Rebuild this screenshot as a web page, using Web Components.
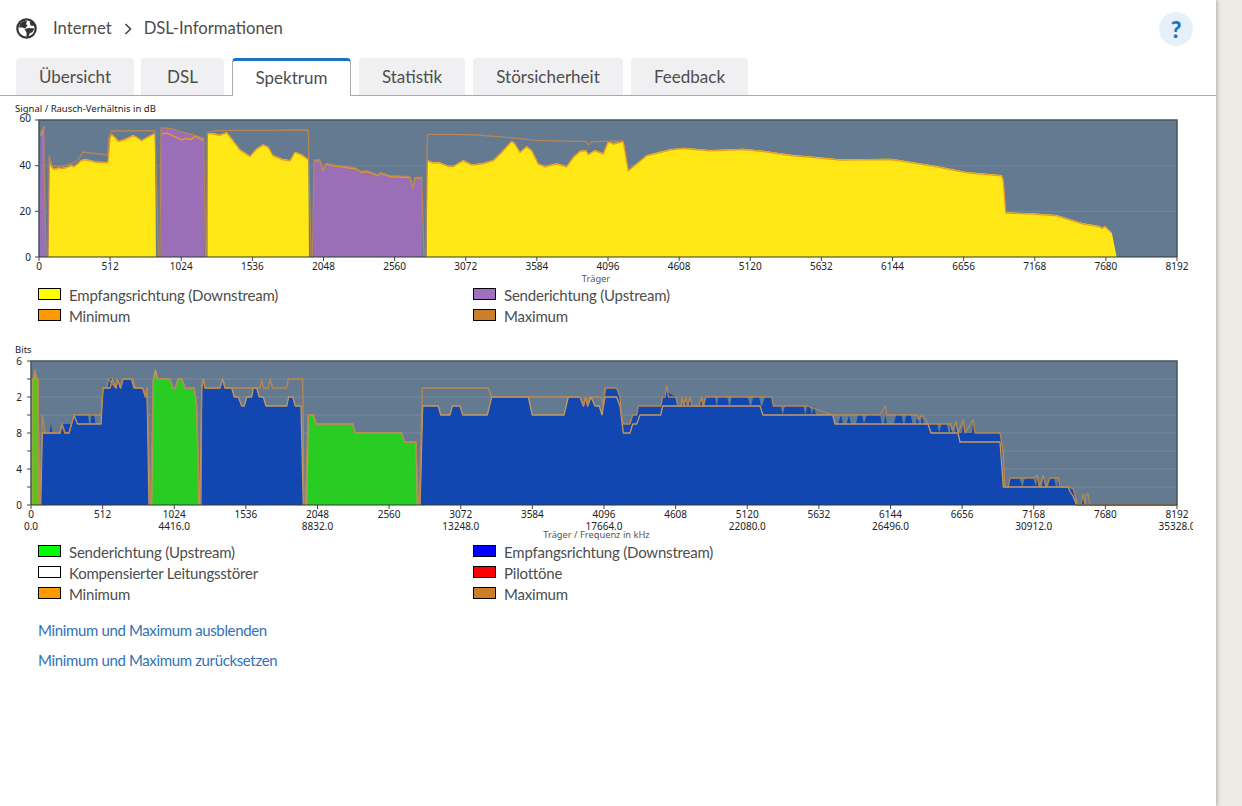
<!DOCTYPE html>
<html lang="de">
<head>
<meta charset="utf-8">
<title>DSL-Informationen</title>
<style>
html, body { margin: 0; height: 806px; overflow: hidden; background: #eeebe5; }
body { font-family: "Lato", "Open Sans", sans-serif; color: #4a4a4a; }
</style>
</head>
<body>
<app-shell>
  <crumb-bar></crumb-bar>
  <tab-bar></tab-bar>
  <spektrum-chart kind="snr"></spektrum-chart>
  <chart-legend items="#ffff00:Empfangsrichtung (Downstream)|#a070c0:Senderichtung (Upstream)|#ff9900:Minimum|#cc7f2a:Maximum"></chart-legend>
  <spektrum-chart kind="bits" style="margin-top:16px"></spektrum-chart>
  <chart-legend items="#00ff00:Senderichtung (Upstream)|#0000ff:Empfangsrichtung (Downstream)|#ffffff:Kompensierter Leitungsstörer|#ff0000:Pilottöne|#ff9900:Minimum|#cc7f2a:Maximum"></chart-legend>
  <link-list></link-list>
</app-shell>

<script>
class AppShell extends HTMLElement {
  constructor() {
    super();
    const shadow = this.attachShadow({ mode: 'open' });
    shadow.innerHTML = `
    <style>
      :host { display: block; width: 1216px; height: 806px; background: #fff; box-shadow: 1px 0 4px rgba(90,85,75,.45); }
    </style>
    <slot></slot>`;
  }
}

class CrumbBar extends HTMLElement {
  constructor() {
    super();
    const shadow = this.attachShadow({ mode: 'open' });
    shadow.innerHTML = `
    <style>
      :host { display: flex; align-items: center; height: 58px; padding: 0 23px 3px 16px; box-sizing: border-box; font-size: 16.7px; color: #4d4d4d; }
      .globe { width: 21px; height: 21px; margin-right: 16px; margin-top: 1px; }
      .sep { width: 8px; height: 12px; margin: 2px 12px 0 12px; }
      .help { margin-left: auto; width: 34px; height: 34px; border-radius: 50%; background: #e6f0f8; color: #1c73c2;
              display: flex; align-items: center; justify-content: center; font-weight: 900; font-size: 23px; margin-top: 2px; }
    </style>
    <svg class="globe" viewBox="0 0 21 21">
      <circle cx="10.5" cy="10.5" r="9.2" fill="#fff" stroke="#333" stroke-width="2.2"/>
      <path d="M4 5.5 L8.5 2.5 L11 3.5 L10 6 L11.5 7.5 L9 10.5 L6.5 9.5 L3 9.5 Z" fill="#333"/>
      <path d="M8.5 11 L13 10 L18.5 10.5 L16.5 14 L13.5 15.5 L12.5 19 L10.5 18.5 L10.5 14.5 Z" fill="#333"/>
      <path d="M13.5 3 L17 5 L18.5 8 L14.5 7.5 Z" fill="#333"/>
    </svg>
    <span>Internet</span>
    <svg class="sep" viewBox="0 0 8 12"><path d="M1.5 1 L6.5 6 L1.5 11" fill="none" stroke="#444" stroke-width="1.6"/></svg>
    <span>DSL-Informationen</span>
    <div class="help">?</div>`;
  }
}

class TabBar extends HTMLElement {
  constructor() {
    super();
    const shadow = this.attachShadow({ mode: 'open' });
    shadow.innerHTML = `
    <style>
      :host { display: flex; height: 38px; padding-left: 16px; box-sizing: border-box; border-bottom: 1px solid #aaa; font-size: 17px; color: #4d4d4d; }
      .tab { height: 37px; box-sizing: border-box; background: #f0f0f2; border-radius: 4px 4px 0 0;
             display: flex; align-items: center; justify-content: center; margin-right: 8px; }
      .active { height: 38px; background: #fff; border: 1px solid #aaa; border-top: 3px solid #1c73c2; border-bottom: 0; padding-bottom: 2px; }
    </style>
    <div class="tab" style="width:118px;margin-right:7px">Übersicht</div>
    <div class="tab" style="width:83px">DSL</div>
    <div class="tab active" style="width:119px">Spektrum</div>
    <div class="tab" style="width:106px">Statistik</div>
    <div class="tab" style="width:150px">Störsicherheit</div>
    <div class="tab" style="width:117px">Feedback</div>`;
  }
}

// alle Punkte in Seitenkoordinaten, snr: [x, y], bits: [x, bit]
const snrDaten = [
  { fill: '#9b6fb8', top: [[39,257],[41,135],[43,128],[44.5,126],[45,257]], max: [[41,133],[43.5,127],[46,257]] },
  { fill: '#ffe816', top: [[48,257],[49.3,156],[50,162],[52,167],[54,168.5],[58,168],[59,166],[61,168],[66,167],[71,165],[74,166],[78,163],[81,160],[85,159],[90,160],[96,161.5],[107,162],[108,161],[110,137],[111.7,134],[115,136.7],[118.3,140.7],[121.7,140],[126.7,138],[133,135],[136.7,136.7],[141.7,140],[146.7,137],[155,132.7],[156,257]],
    max: [[48,257],[49.3,156],[52,166],[58,167],[71,164],[78,160],[83,152],[90,153],[107.7,155],[108.5,140],[111,131],[155,130.7],[158.5,257]] },
  { fill: '#9b6fb8', top: [[161,257],[161,127.7],[165,128],[173,129],[181.7,132],[193,134.7],[203.7,138],[204,257]],
    min: [[161.7,133],[166.7,132],[173,135],[181.7,139],[186.7,137.7],[191.7,138.7],[195,135.3],[203.7,140]], max: [[160,257],[161,127.7],[165,128],[173,129],[181.7,132],[193,134.7],[203.7,138],[205.5,257]] },
  { fill: '#ffe816', top: [[207.5,257],[207.3,132.7],[213,133],[220,134.7],[226.7,132],[233,140],[240,149.3],[250,155.7],[256.7,148.3],[263.3,144.3],[268.3,146.7],[273,155],[283,159],[290,160],[295,151.7],[301.7,154.3],[308.3,159],[309,257]],
    max: [[206.5,257],[207.3,132.7],[216.7,130.7],[308.3,130],[311,257]] },
  { fill: '#9b6fb8', top: [[314,257],[314,160],[320,160],[322.7,170],[326,163.3],[333,165],[346.7,166.7],[355,167.7],[361.7,171.7],[366.7,170.7],[378.3,175],[380,172.3],[390,175.7],[410,176.7],[412.7,187.3],[415,177.3],[421.7,177.3],[422.3,257]],
    max: [[312.5,257],[314,160],[320,160],[322.7,170],[326,163.3],[333,165],[346.7,166.7],[355,167.7],[361.7,171.7],[366.7,170.7],[378.3,175],[380,172.3],[390,175.7],[410,176.7],[412.7,187.3],[415,177.3],[421.7,177.3],[424,257]] },
  { fill: '#ffe816', top: [[426.7,257],[427.3,160],[433.3,162.3],[440,162.3],[448.3,165.7],[453.3,165.7],[463.3,160],[471.7,164.3],[481.7,163.3],[493.3,160],[503.3,150],[511.7,140.7],[515,143.3],[520,151.7],[526.7,146],[531.7,150],[538.3,163.3],[545,166],[556.7,163.3],[566.7,166],[573.3,156.7],[580,150.7],[586,150],[588.3,154],[595,150],[603.3,153.3],[608.3,141],[613.3,143.3],[623.3,141],[628.3,170],[636.7,163.3],[646.7,155],[670,149.3],[683.3,147.7],[710,150],[743.3,148.7],[763.3,150.7],[793.3,155],[820,157.3],[840,159.3],[890,158.7],[900,160],[936.7,166],[966.7,172],[1001.7,175],[1003.3,180],[1005.7,212.3],[1033.3,213.3],[1056.7,215],[1083.3,223.3],[1100,226],[1101.7,227.7],[1105,226],[1111.7,232.3],[1116.7,257],[1177,257]],
    max: [[426,257],[427.3,134.3],[453.3,134.3],[476.7,135],[510,137.7],[536.7,140.3],[576.7,141.3],[586,141.5],[588.3,145],[591.7,141.7],[623.3,141]] }
];

const bitsDaten = [
  { fill: '#5fc020', top: [[31.7,0],[32,14],[33.5,14],[35,15],[36.5,14],[38,14],[39.3,0]], max: [[32,14],[33.5,14],[35,15],[36.5,14],[38,14],[39.3,0]] },
  { fill: '#1246b0', top: [[40.7,0],[42.3,8],[49.5,8],[51,9],[52.5,8],[60,8],[62,9],[71,9],[73,10],[88,10],[89,9],[90.5,9],[91.5,10],[94,10],[95.5,9],[101,9],[103,13],[107,13],[108,14],[114,14],[116,13],[117.5,14],[119,14],[120.5,13],[123,14],[133,14],[135,13],[143,13],[145.5,12],[147,13],[149,0]],
    min: [[40.7,0],[42.3,8],[60,8],[62,9],[65,8],[69,8],[74,10],[77.5,9],[101,9],[103,13],[110,13],[112.5,14],[116,13],[117.5,14],[120.5,13],[123,14],[131.5,14],[134,13],[142.5,13],[145.5,12],[147,13],[149,0]],
    max: [[40,0],[42.3,10],[45,8],[60,8],[62,9],[65,8],[69,8],[74,10],[101,10],[103,13],[107,13],[108.5,14],[116,13],[117.5,14],[120.5,13],[123,14],[133,14],[135,13],[143,13],[145.5,12],[147,13],[150.5,0]] },
  { fill: '#28cc22', top: [[151.7,0],[153.3,14],[155.5,15],[157.5,14],[170,14],[173,13],[175.5,13],[178,14],[182,14],[185,13],[194.3,13],[196.7,11],[199,0]],
    max: [[150.7,0],[153.3,14],[170,14],[173,13],[175.5,13],[178,14],[182,14],[185,13],[194.3,13],[196.7,11],[199.5,0]] },
  { fill: '#1246b0', top: [[200,0],[201.7,13],[203.3,14],[205,13],[220,13],[222.7,14],[225,13],[231.7,13],[234.3,12],[238.3,12],[241.7,11],[244.3,11],[246.7,12],[251.7,12],[253.3,13],[256.7,13],[259.3,12],[263.3,12],[266,11],[286.7,11],[288.7,12],[292.7,12],[295.3,11],[301,11],[303.3,0]],
    max: [[201,0],[201.7,13],[203.3,14],[205,13],[220,13],[222.7,14],[225,13],[260,13],[261.7,14],[263.5,13],[268.3,13],[270,14],[272.7,13],[286.7,13],[288.3,14],[302.7,14],[304,0]] },
  { fill: '#28cc22', top: [[306.7,0],[308.3,10],[313.3,10],[316,9],[352.7,9],[355.3,8],[401.7,8],[404.3,7],[416,7],[417.3,0]],
    max: [[305,0],[308,10],[314,10],[316,9],[352.7,9],[355.3,8],[401.7,8],[404.3,7],[416,7],[418.5,0]] },
  { fill: '#1246b0', top: [[420.7,0],[422.7,11],[438.3,11],[440.7,10],[450,10],[452.3,11],[460,11],[462.7,10],[487.3,10],[491.7,12],[528.3,12],[532.3,10],[564,10],[568.3,12],[580,12],[583.3,11],[585.7,12],[587.7,11],[591,12],[595,11],[599.3,11],[602,10],[605,12],[606.7,13],[616.7,13],[620,12],[621.7,10],[623.3,9],[630,9],[632.7,10],[636.7,10],[638.3,11],[660.7,11],[662.7,12],[666,12.5],[666.7,13],[668,12.5],[676,12],[677.7,11],[681,11],[682,12],[683.5,11],[685,11],[686,12],[687.5,11],[689,11],[690,12],[692,11],[699,11],[701.7,12],[703,11],[704.5,11],[706,12],[715,12],[716.5,11],[717,11],[718.3,12],[727.3,12],[729,11],[730,11],[731.7,12],[747.7,12],[750,11],[751,11],[753.3,12],[759,12],[761,11],[762,11],[765,12],[771.7,12],[773.3,11],[780.7,11],[782.7,10],[785,11],[803.3,11],[805.3,10],[807.3,11],[810,11],[811.7,10],[814,11],[816,10],[832.7,10],[835,9],[838,9],[841,10],[843,9],[846.7,9],[849,10],[851,9],[856,9],[858,10],[862,10],[864,9],[866.7,10],[880,10],[882,9],[884,9],[885.3,10],[887,9],[894,9],[896,10],[901.7,10],[903.3,9],[904.5,9],[906,10],[910.7,10],[912.7,9],[916,9],[917.3,10],[919,9],[921,9],[922,10],[924,9],[928.3,9],[937.3,9],[939,8],[941.7,9],[946.7,9],[948.7,8],[950,8],[950.7,9],[952.3,8],[955,8],[956,9],[958.3,8],[962,8],[963.3,9],[965,8],[972,8],[973.3,9],[975,8],[1000,8],[1001.7,6],[1003.3,2],[1008.3,2],[1010,3],[1019.3,3],[1022.3,2],[1025,3],[1033.3,3],[1036,2],[1037.3,3],[1039.3,2],[1042,2],[1043.3,3],[1046,2],[1048,2],[1050,3],[1054,3],[1056,2],[1057.3,2],[1058.3,3],[1060,2],[1068.3,2],[1073.3,1.8],[1076.7,0],[1081,0],[1083,1],[1085,0],[1177,0]],
    min: [[420,0],[422.7,11],[438.3,11],[440.7,10],[450,10],[452.3,11],[460,11],[462.7,10],[487.3,10],[491.7,12],[528.3,12],[532.3,10],[564,10],[568.3,12],[580,12],[583.3,11],[585.7,12],[587.7,11],[591,12],[595,11],[599.3,11],[602,10],[605,12],[616.7,12],[620,11],[623.3,8],[630,8],[632.7,9],[636.7,9],[640,10],[660.7,10],[662.7,11],[760,11],[763,10],[832.7,10],[835,9],[928,9],[931,8],[958,8],[960,7],[1000,7],[1003.3,2],[1068,2],[1070,1.5],[1073,1],[1076.7,0],[1177,0]],
    max: [[419.3,0],[422.3,13],[488.3,13],[491.7,12],[580,12],[581.7,11.5],[583.7,11],[585.7,12],[587.7,11],[589.5,12],[601,12],[603,11],[605,13],[616.7,13],[620,12],[621.7,10],[623.3,9],[630,9],[632.7,10],[636.7,10],[638.3,11],[660.7,11],[662.7,12],[665,12],[666.7,13.3],[668.5,12],[676,12],[677.7,11],[681,11],[682,12],[683.5,11],[686,12],[687.5,11],[690,12],[692,11],[699,11],[701.7,12],[703,11],[706,12],[771.7,12],[773.3,11],[780.7,11],[785,11],[807,11],[832.7,10],[880,10],[885.3,11],[887,10],[917.3,10],[918.5,9.5],[922,10],[928.3,9],[950.7,9],[952.3,8.3],[956,9.3],[958,8],[963.3,9.5],[965,8],[973.3,9.5],[975,8],[1000,8],[1003.3,6],[1004.8,2],[1008.3,2],[1010,3],[1022,3],[1025,3],[1033.3,3],[1037.3,3.3],[1039.3,2],[1043.3,3.3],[1046,2],[1050,3],[1055,3],[1058.3,3],[1060,2],[1068.3,2],[1073.3,1.8],[1077.5,0],[1081,0],[1083,1.2],[1085,0],[1086,1.2],[1088,1.2],[1090,0],[1177,0]] }
];

const punkte = list => list.map(p => p[0] + ',' + p[1]).join(' ');

class SpektrumChart extends HTMLElement {
  connectedCallback() {
    const shadow = this.attachShadow({ mode: 'open' });
    const snr = this.getAttribute('kind') == 'snr';
    const links = snr ? 39 : 31;
    const rechts = 1177;
    const oben = snr ? 120 : 361;
    const unten = snr ? 257 : 505;
    const startY = snr ? 100 : 342;
    const hoehe = snr ? 184 : 199;
    const yVon = w => unten - w * (unten - oben) / (snr ? 60 : 16);
    const umrechnen = list => snr ? list : list.map(p => [p[0], yVon(p[1])]);

    let teile = '';
    teile += `<rect x="${links}" y="${oben}" width="${rechts - links}" height="${unten - oben}" fill="#637a91"/>`;

    // Gitter
    for (let w = snr ? 20 : 2; w < (snr ? 60 : 16); w += snr ? 20 : 2) {
      teile += `<line x1="${links}" x2="${rechts}" y1="${yVon(w)}" y2="${yVon(w)}" stroke="#74889b"/>`;
    }

    const daten = snr ? snrDaten : bitsDaten;
    for (const d of daten) {
      teile += `<polygon points="${punkte(umrechnen(d.top))}" fill="${d.fill}"/>`;
    }
    for (const d of daten) {
      const min = umrechnen(d.min || d.top);
      const kante = snr ? min.filter(p => p[1] < unten).map(p => [p[0], p[1] + 0.8]) : min;
      teile += `<polyline points="${punkte(kante)}" fill="none" stroke="${snr ? '#eb9a22' : '#c49a62'}" stroke-width="1.3" stroke-linejoin="round"/>`;
      if (d.max) {
        teile += `<polyline points="${punkte(umrechnen(d.max))}" fill="none" stroke="${snr ? '#b5855a' : '#b88850'}" stroke-width="1.3" stroke-linejoin="round"/>`;
      }
    }

    // Rahmen
    teile += `<path d="M${links} ${unten} V${oben} H${rechts} V${unten}" fill="none" stroke="#46545f" stroke-width="1.5"/>`;
    teile += `<line x1="${links}" x2="${rechts}" y1="${unten}" y2="${unten}" stroke="#2c3a33" stroke-width="1.2"/>`;

    // Achsen
    const schritt = (rechts - links) / 16;
    for (let i = 0; i <= 16; i++) {
      const x = links + i * schritt;
      teile += `<line x1="${x}" x2="${x}" y1="${unten}" y2="${unten + 4}" stroke="#444"/>`;
      teile += `<text x="${x}" y="${unten + 13}" text-anchor="middle">${i * 512}</text>`;
      if (!snr && i % 2 == 0) {
        teile += `<text x="${x}" y="${unten + 25}" text-anchor="middle">${(i * 2208).toFixed(1)}</text>`;
      }
    }
    const werte = snr ? [0, 20, 40, 60] : [0, 4, 8, 12, 16];
    for (const w of werte) {
      const versatz = snr && w == 60 ? 2 : 3.5;
      teile += `<text x="${links - (snr ? 8 : 9)}" y="${yVon(w) + versatz}" text-anchor="end">${w}</text>`;
    }
    for (let w = 0; w <= (snr ? 60 : 16); w += snr ? 20 : 2) {
      teile += `<line x1="${links - 4}" x2="${links}" y1="${yVon(w)}" y2="${yVon(w)}" stroke="#444"/>`;
    }
    if (snr) {
      teile += `<text class="titel" x="15" y="111.5">Signal / Rausch-Verhältnis in dB</text>`;
      teile += `<text class="achse" x="596" y="281.5" text-anchor="middle">Träger</text>`;
    } else {
      teile += `<text class="titel" x="15" y="352.5">Bits</text>`;
      teile += `<text class="achse" x="596.5" y="538" text-anchor="middle">Träger / Frequenz in kHz</text>`;
    }

    shadow.innerHTML = `
    <style>
      :host { display: block; padding-left: 15px; height: ${hoehe}px; }
      svg { display: block; }
      text { font: 10px "Noto Sans", "DejaVu Sans", sans-serif; fill: #222; }
      text.titel { font-size: 9.5px; }
      text.achse { font-size: 9.3px; fill: #555; }
    </style>
    <svg width="1178" height="${hoehe}" viewBox="15 ${startY} 1178 ${hoehe}">${teile}</svg>`;
    if (snr) this.style.marginTop = '4px';
  }
}

class ChartLegend extends HTMLElement {
  connectedCallback() {
    const shadow = this.attachShadow({ mode: 'open' });
    const zeilen = this.getAttribute('items').split('|').map(eintrag => {
      const [farbe, text] = eintrag.split(':');
      return `<div class="item"><span class="box" style="background:${farbe}"></span><span>${text}</span></div>`;
    }).join('');
    shadow.innerHTML = `
    <style>
      :host { display: grid; grid-template-columns: 435px 1fr; padding-left: 38px; font-size: 15px; letter-spacing: -0.2px; color: #4d4d4d; }
      .item { display: flex; align-items: center; height: 21px; }
      .box { width: 21px; height: 10px; border: 1px solid #000; margin-right: 8px; margin-top: -1px; }
    </style>
    ${zeilen}`;
  }
}

class LinkList extends HTMLElement {
  constructor() {
    super();
    const shadow = this.attachShadow({ mode: 'open' });
    shadow.innerHTML = `
    <style>
      :host { display: block; padding: 11px 0 0 38px; font-size: 15px; letter-spacing: -0.36px; color: #2f72b8; }
      div { height: 30px; display: flex; align-items: center; }
    </style>
    <div>Minimum und Maximum ausblenden</div>
    <div>Minimum und Maximum zurücksetzen</div>`;
  }
}

customElements.define('app-shell', AppShell);
customElements.define('crumb-bar', CrumbBar);
customElements.define('tab-bar', TabBar);
customElements.define('spektrum-chart', SpektrumChart);
customElements.define('chart-legend', ChartLegend);
customElements.define('link-list', LinkList);
</script>
</body>
</html>
